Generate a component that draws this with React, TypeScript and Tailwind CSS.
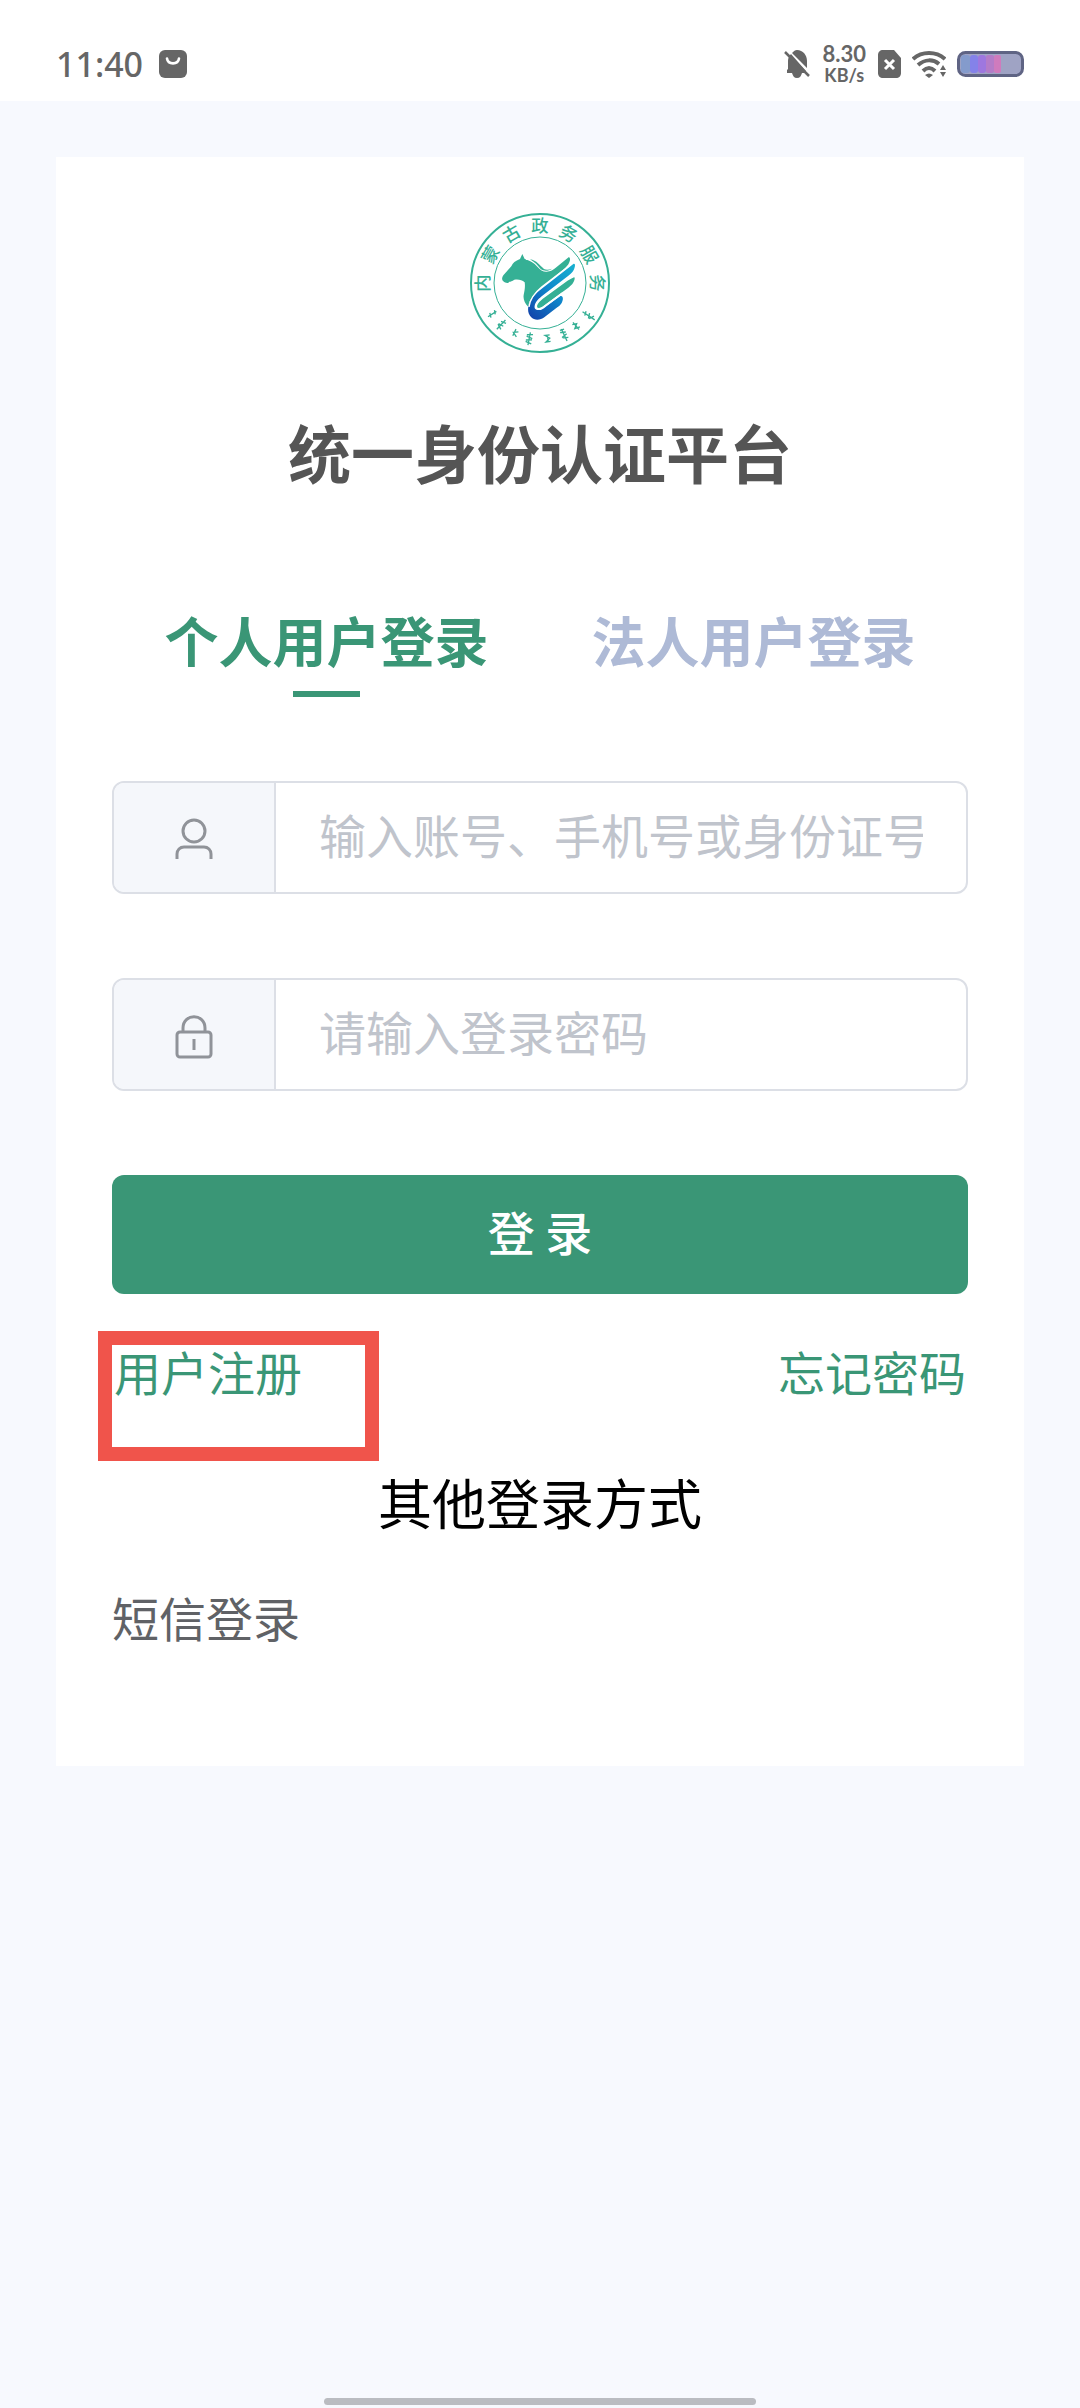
import React from "react";

const sealText = ["内", "蒙", "古", "政", "务", "服", "务"];
const sealAngles = [-90, -60, -30, 0, 30, 60, 90];
const scriptGlyphs = [
  { angle: -123, d: "M270 66V96M263 72L277 77M264 88L276 93" },
  { angle: -137, d: "M270 62V100M261 70L278 76M262 82L278 78M262 94L277 88" },
  { angle: -154, d: "M263 76L277 84L264 92M274 74V96" },
  { angle: -169, d: "M270 62V101M261 68L279 72M261 80L279 76M261 84L279 88M261 96L279 92" },
  { angle: 172, d: "M263 74H277L264 84L277 94H263M270 74V94" },
  { angle: 155, d: "M270 60V100M262 68L278 74M262 80L279 76M262 86L278 92M263 96L276 98" },
  { angle: 140, d: "M263 74L278 80L264 88L276 94M270 70V98" },
  { angle: 124, d: "M270 54V98M262 62L276 70M262 78L277 72M263 90L276 86" },
];

function Seal() {
  return (
    <svg className="size-35 overflow-visible" viewBox="60 42 420 420" role="img" aria-label="内蒙古政务服务">
      <defs>
        <linearGradient id="ribbon" x1="0.9" y1="0" x2="0.1" y2="1">
          <stop offset="0" stopColor="#18aed0" />
          <stop offset="0.5" stopColor="#0f87cb" />
          <stop offset="1" stopColor="#1244ab" />
        </linearGradient>
      </defs>
      <circle cx="270" cy="252" r="207" fill="#fff" stroke="#35b095" strokeWidth="6" />
      <circle cx="270" cy="252" r="138" fill="none" stroke="#35b095" strokeWidth="3" />
      {sealText.map((c, i) => (
        <text
          key={i}
          x="270"
          y="100"
          fontSize="52"
          fontWeight="500"
          textAnchor="middle"
          fill="#35b095"
          fontFamily="Noto Sans CJK SC, sans-serif"
          transform={`rotate(${sealAngles[i]} 270 252)`}
        >
          {c}
        </text>
      ))}
      {scriptGlyphs.map((g) => (
        <g key={g.angle} transform={`rotate(${g.angle} 270 252)`}>
          <path d={g.d} fill="none" stroke="#35b095" strokeWidth="4" />
        </g>
      ))}
      <path
        fill="#35b095"
        d="M217 165L224 180C240 184 252 192 262 203C272 214 282 221 298 217C306 215 312 211 320 204L354 176C360 172 362 181 358 190C355 198 349 204 342 210L276 264C258 278 236 300 235 324C224 312 219 300 221 288C224 274 226 262 224 250C216 242 204 240 193 242C186 246 182 248 178 248C175 254 166 252 160 247C155 243 155 236 160 229L184 202C188 192 196 185 210 180Z"
      />
      <path d="M228 181C250 183 264 198 274 209C282 216 292 217 302 212" fill="none" stroke="#fff" strokeWidth="3" />
      <path d="M240 181C260 184 270 200 282 210C290 214 298 212 306 209C294 217 282 217 272 210C264 200 254 189 240 181Z" fill="#35b095" />
      <path
        fill="url(#ribbon)"
        d="M370 195C377 192 376 204 371 213C368 219 363 224 357 229L276 291C262 302 252 314 254 327C258 336 270 334 279 328L330 292C340 288 341 302 335 312C331 319 325 323 318 328L284 354C270 364 254 365 243 354C231 342 232 321 242 304C250 290 262 279 275 269Z"
      />
      <path
        fill="#35b095"
        d="M370 234C377 233 374 244 369 252C366 257 361 261 355 266L284 318C274 327 264 329 259 324C256 315 267 304 276 297L350 243Z"
      />
      <path
        d="M375 230C365 236 358 239 350 244L276 298C264 308 254 318 260 327C268 335 278 328 286 321L338 282"
        fill="none"
        stroke="#fff"
        strokeWidth="5"
      />
      <path d="M362 197L275 264C258 278 240 298 237 324" fill="none" stroke="#fff" strokeWidth="4" />
    </svg>
  );
}

function StatusBar() {
  return (
    <header className="flex items-start justify-between bg-white px-14 pt-10 pb-[13px] font-['Noto_Sans'] text-[#666]">
      <div className="flex h-12 items-center gap-4">
        <time className="text-[34px] leading-12 font-medium">11:40</time>
        <svg className="size-7" viewBox="0 0 28 28" aria-hidden="true">
          <rect width="28" height="28" rx="6" fill="#666" />
          <path d="M8 8.500C9 15 19 15 20 8.500" fill="none" stroke="#fff" strokeWidth="2.600" strokeLinecap="round" />
        </svg>
      </div>
      <div className="flex h-12 items-center">
        <svg className="h-7 w-[26px]" viewBox="0 0 26 28" aria-hidden="true">
          <path
            fill="#666"
            d="M3 23V20L4 19V11C4 8 5 6 7 4L22 21V23H18C17 26 16 28 13 28C10 28 9 26 8 23ZM8 3C10 1 11 0 13 0C19 0 23 5 23 11V18Z"
          />
          <path d="M1 2L25 26" stroke="#666" strokeWidth="2.500" />
        </svg>
        <div className="mx-3 text-center font-['Lato'] font-bold">
          <div className="text-[22px] leading-[22px]">8.30</div>
          <div className="text-[18px] leading-5">KB/s</div>
        </div>
        <svg className="h-7 w-6" viewBox="0 0 24 28" aria-hidden="true">
          <path fill="#666" d="M5 0H16L23 8V23C23 26 21 28 18 28H5C2 28 0 26 0 23V5C0 2 2 0 5 0Z" />
          <path d="M7 10L16 19M16 10L7 19" stroke="#fff" strokeWidth="3" />
        </svg>
        <svg className="ml-[10px] h-7 w-[34px]" viewBox="0 0 34 28" aria-hidden="true">
          <g fill="none" stroke="#666" strokeWidth="4">
            <path d="M1 9C10 1 24 1 33 9" />
            <path d="M6 15C13 9 21 9 27 14" />
            <path d="M11 21C15 17 19 17 23 21" />
          </g>
          <path fill="#666" d="M13 25Q17 22 21 25L17 28ZM31 15L34 20H28ZM31 27L28 22H34Z" />
        </svg>
        <svg className="ml-[11px] h-[26px] w-[67px]" viewBox="0 0 67 26" aria-hidden="true">
          <rect x="1.500" y="1.500" width="64" height="23" rx="7" fill="#9fa3c4" stroke="#5f6484" strokeWidth="3" />
          <rect x="4" y="4" width="9" height="18" rx="3" fill="#849bcc" />
          <rect x="13" y="4" width="8" height="18" rx="3" fill="#8482e9" />
          <rect x="21" y="4" width="8" height="18" rx="3" fill="#9e77df" />
          <rect x="29" y="4" width="8" height="18" rx="2" fill="#b47cc8" />
          <rect x="37" y="4" width="7" height="18" rx="2" fill="#cf7bbd" />
        </svg>
      </div>
    </header>
  );
}

function UserIcon() {
  return (
    <svg className="size-12" viewBox="0 0 48 48" fill="none" stroke="#909399" strokeWidth="3" aria-hidden="true">
      <circle cx="24" cy="17" r="11" />
      <path d="M7 45V40C7 36 10 33 14 33H34C38 33 41 36 41 40V45" />
    </svg>
  );
}

function LockIcon() {
  return (
    <svg className="size-12" viewBox="0 0 48 48" fill="none" stroke="#909399" strokeWidth="3" aria-hidden="true">
      <rect x="7" y="21" width="34" height="25" rx="3" />
      <path d="M13 21V17C13 2 35 2 35 17V21M24 28V39" />
    </svg>
  );
}

type FieldProps = {
  id: string;
  label: string;
  type: string;
  placeholder: string;
  icon: React.ReactNode;
};

function Field({ id, label, type, placeholder, icon }: FieldProps) {
  return (
    <div className="flex h-[113px] overflow-hidden rounded-xl border-2 border-[#dcdfe6] bg-white">
      <label
        htmlFor={id}
        aria-label={label}
        className="flex w-[162px] shrink-0 items-center justify-center border-r-2 border-[#dcdfe6] bg-[#f5f7fb]"
      >
        {icon}
      </label>
      <input
        id={id}
        type={type}
        placeholder={placeholder}
        className="mx-[43px] min-w-0 flex-1 bg-transparent pb-[6px] text-[47px] text-[#606266] outline-none placeholder:text-[#c0c4cc]"
      />
    </div>
  );
}

export default function App() {
  return (
    <div className="flex min-h-screen flex-col bg-[#f7f9fe] font-['Noto_Sans_CJK_SC',sans-serif]">
      <StatusBar />
      <main className="mx-14 mt-14 flex-none bg-white px-14 pt-14 pb-[114px]">
        <div className="flex justify-center">
          <Seal />
        </div>
        <h1 className="mt-[53px] text-center text-[63px] leading-[90px] font-bold text-[#555]">统一身份认证平台</h1>
        <div role="tablist" className="mt-[104px] flex justify-center gap-[103px] text-[54px] leading-20 font-bold">
          <button role="tab" aria-selected="true" className="flex flex-col items-center text-[#3a9676]">
            个人用户登录
            <span className="mt-[11px] h-[6px] w-[67px] bg-[#3a9676]" />
          </button>
          <button role="tab" aria-selected="false" className="self-start text-[#aebad6]">
            法人用户登录
          </button>
        </div>
        <form className="mt-[84px] flex flex-col gap-[84px]" onSubmit={(e) => e.preventDefault()}>
          <Field id="account" label="账号" type="text" placeholder="输入账号、手机号或身份证号" icon={<UserIcon />} />
          <Field id="password" label="密码" type="password" placeholder="请输入登录密码" icon={<LockIcon />} />
          <button type="submit" className="h-[119px] rounded-xl bg-[#3a9676] pb-[6px] text-[47px] font-medium text-white">
            登 录
          </button>
        </form>
        <div className="mt-[42px] flex justify-between px-[2px] text-[47px] leading-[70px] text-[#3a9676]">
          <a href="#register" className="relative">
            用户注册
            <span className="absolute -top-[5px] -left-4 h-[130px] w-[281px] border-[14px] border-[#f0544b]" />
          </a>
          <a href="#forgot">忘记密码</a>
        </div>
        <h2 className="mt-14 text-center text-[54px] leading-20 text-black">其他登录方式</h2>
        <a href="#sms" className="mt-10 block w-fit text-[47px] leading-[70px] text-[#606266]">
          短信登录
        </a>
      </main>
      <div className="mx-auto mt-auto mb-[3px] h-[7px] w-2/5 rounded-full bg-[#babcc1]" />
    </div>
  );
}
